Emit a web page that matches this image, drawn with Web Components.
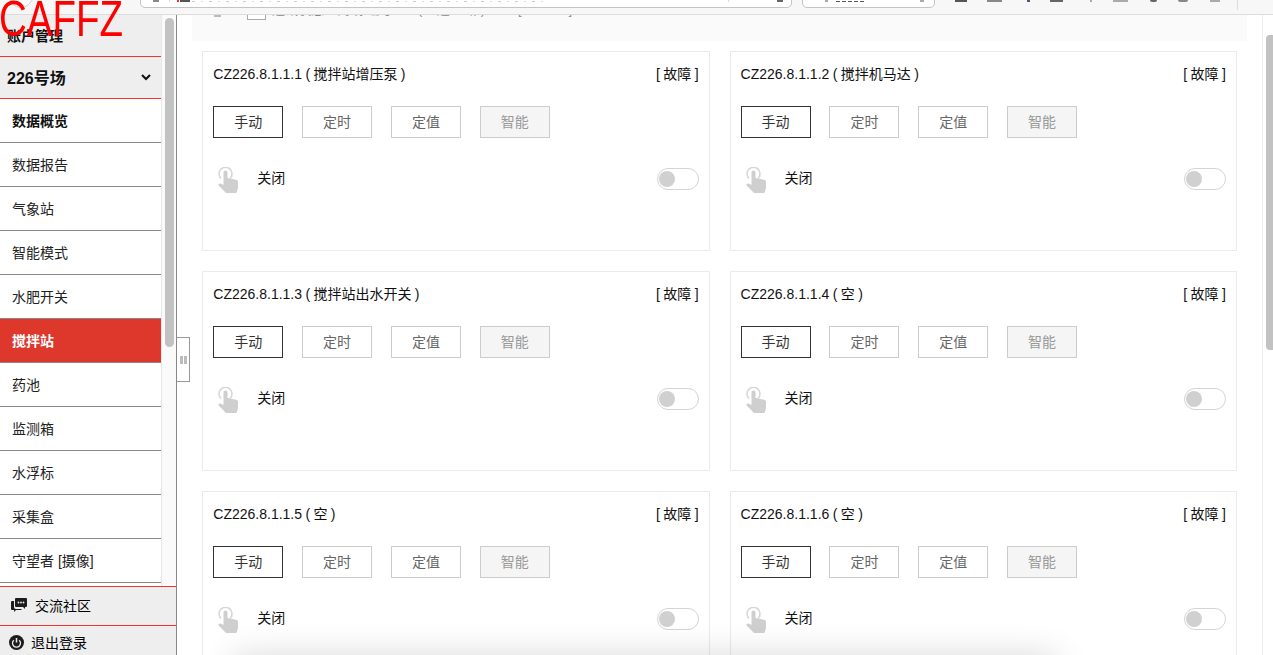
<!DOCTYPE html>
<html lang="zh">
<head>
<meta charset="utf-8">
<title>搅拌站</title>
<style>
    html, body { margin: 0; height: 100%; overflow: hidden; background: #fff; }
    body { font-family: "Liberation Sans", "Noto Sans CJK SC", sans-serif; font-size: 14px; color: #000; }
</style>
</head>
<body>
<app-shell>
    <browser-bar slot="top"></browser-bar>
    <side-bar slot="side">
        <nav-item>数据概览</nav-item>
        <nav-item>数据报告</nav-item>
        <nav-item>气象站</nav-item>
        <nav-item>智能模式</nav-item>
        <nav-item>水肥开关</nav-item>
        <nav-item active>搅拌站</nav-item>
        <nav-item>药池</nav-item>
        <nav-item>监测箱</nav-item>
        <nav-item>水浮标</nav-item>
        <nav-item>采集盒</nav-item>
        <nav-item>守望者 [摄像]</nav-item>
    </side-bar>
    <main-panel slot="main">
        <device-card code="CZ226.8.1.1.1" name="搅拌站增压泵"></device-card>
        <device-card code="CZ226.8.1.1.2" name="搅拌机马达"></device-card>
        <device-card code="CZ226.8.1.1.3" name="搅拌站出水开关"></device-card>
        <device-card code="CZ226.8.1.1.4" name="空"></device-card>
        <device-card code="CZ226.8.1.1.5" name="空"></device-card>
        <device-card code="CZ226.8.1.1.6" name="空"></device-card>
    </main-panel>
</app-shell>
<water-mark>CAFFZ</water-mark>

<template id="app-shell">
    <style>
        :host { display: flex; flex-direction: column; height: 655px; overflow: hidden; position: relative; }
        .body { flex: 1; min-height: 0; display: flex; }
        /* window shadow that comes up from below the picture */
        .shade { position: absolute; left: 240px; width: 810px; top: 662px; height: 20px; box-shadow: 0 0 34px 6px rgba(0,0,0,.16); }
    </style>
    <slot name="top"></slot>
    <div class="body">
        <slot name="side"></slot>
        <slot name="main"></slot>
    </div>
    <div class="shade"></div>
</template>

<template id="browser-bar">
    <style>
        :host { display: flex; align-items: flex-start; height: 14px; background: #f7f7f7; border-bottom: 1px solid #dcdcdc; overflow: hidden; flex: none; }
        .back { box-sizing: border-box; flex: none; width: 24px; height: 24px; margin: -16px 0 0 9px; border: 1px solid #ccc; border-radius: 50%; background: #fff; }
        .box { box-sizing: border-box; flex: none; height: 24px; margin-top: -16px; padding-bottom: 5px; background: #fff; border: 1px solid #c4c4c4; border-radius: 5px; display: flex; align-items: flex-end; }
        .box i { display: block; flex: none; height: 2px; background: #888; }
        .addr { margin-left: 107px; width: 652px; }
        .search { margin-left: 10px; width: 133px; }
        .strip { background: repeating-linear-gradient(90deg, #ccc 0 3px, transparent 3px 9px, #ddd 9px 11px, transparent 11px 17px) !important; height: 1px !important; }
        .box .sep { width: 1px; height: 24px; background: #ddd; }
        .dash { background: repeating-linear-gradient(90deg, #555 0 4px, transparent 4px 6px) !important; height: 1px !important; }
        .tools { display: flex; flex: none; align-items: flex-start; }
        .tools i { display: block; flex: none; height: 2px; }
        .end { flex: none; margin-left: 17px; width: 1px; height: 10px; background: #ddd; }
    </style>
    <div class="back"></div>
    <div class="box addr">
        <i style="margin-left:12px;width:6px"></i>
        <i class="sep" style="margin-left:10px"></i>
        <i style="margin-left:7px;width:2px;background:#e33"></i>
        <i style="margin-left:1px;width:10px;background:#555"></i>
        <i class="strip" style="margin-left:2px;width:353px"></i>
        <i class="sep" style="margin-left:183px"></i>
        <i style="margin-left:48px;width:6px;background:#666"></i>
    </div>
    <div class="box search">
        <i style="margin-left:22px;width:3px;background:#aaa"></i>
        <i class="dash" style="margin-left:8px;width:30px"></i>
        <i style="margin-left:54px;width:4px;background:#aaa"></i>
    </div>
    <div class="tools">
        <i style="margin-left:20px;width:12px;background:#555"></i>
        <i style="margin-left:20px;width:15px;background:#888"></i>
        <i style="margin-left:25px;width:3px;background:#557"></i>
        <i style="margin-left:20px;width:13px;background:#666"></i>
        <i style="margin-left:27px;width:2px;background:#aaa"></i>
        <i style="margin-left:21px;width:15px;background:#aaa"></i>
        <i style="margin-left:22px;width:7px;background:#666;border-radius:0 0 4px 4px"></i>
        <i style="margin-left:21px;width:10px;background:#888;border-radius:0 0 5px 5px"></i>
        <i style="margin-left:22px;width:10px;background:#aaa"></i>
    </div>
    <div class="end"></div>
</template>

<template id="side-bar">
    <style>
        :host { display: flex; flex-direction: column; flex: none; width: 177px; box-sizing: border-box; border-right: 1px solid #888; overflow: hidden; }
        .wrap { flex: 1; min-height: 0; display: flex; overflow: hidden; }
        .col { flex: none; width: 161px; }
        .head { background: #eee; border-bottom: 1px solid #e33; font-weight: bold; color: #111; box-sizing: border-box; height: 42px; padding: 0 10px 2px 7px; display: flex; align-items: center; justify-content: space-between; }
        .farm { font-size: 16px; padding-bottom: 1px; }
        .farm svg { display: block; }
        .track { flex: 1; background: #fafafa; border-left: 1px solid #e8e8e8; }
        .thumb { margin: 3px 0 0 3px; width: 9px; height: 329px; background: #c2c2c2; border-radius: 5px; }
        .foot { flex: none; background: #eee; }
        .foot div { display: flex; align-items: center; border-top: 1px solid #e33; }
        .chat { height: 36px; padding: 0 0 2px 11px; gap: 8px; }
        .off { height: 26px; padding: 3px 0 0 9px; gap: 7px; }
        .foot svg { display: block; flex: none; }
    </style>
    <div class="wrap">
        <div class="col">
            <div class="head">账户管理</div>
            <div class="head farm">226号场
                <svg width="10" height="7" viewBox="0 0 10 7"><path d="M1 1l4 4 4-4" fill="none" stroke="#111" stroke-width="2"/></svg>
            </div>
            <slot></slot>
        </div>
        <div class="track"><div class="thumb"></div></div>
    </div>
    <div class="foot">
        <div class="chat">
            <svg width="16" height="14" viewBox="0 0 16 14"><path d="M5 0h10a1 1 0 0 1 1 1v7a1 1 0 0 1-1 1h-1v2l-2-2H5a1 1 0 0 1-1-1V1a1 1 0 0 1 1-1z" fill="#1c1c1c"/><path d="M3 3v6a2 2 0 0 0 2 2h6l-1 1H5l-2 2v-2H1a1 1 0 0 1-1-1V4a1 1 0 0 1 1-1z" fill="#1c1c1c"/><circle cx="7.500" cy="4.500" r=".9" fill="#eee"/><circle cx="10" cy="4.500" r=".9" fill="#eee"/><circle cx="12.500" cy="4.500" r=".9" fill="#eee"/></svg>
            <span>交流社区</span>
        </div>
        <div class="off">
            <svg width="15" height="15" viewBox="0 0 15 15"><circle cx="7.500" cy="7.500" r="7.500" fill="#1c1c1c"/><path d="M4.800 5.200a4 4 0 1 0 5.400 0" fill="none" stroke="#eee" stroke-width="1.300"/><path d="M7.500 3v4.500" stroke="#eee" stroke-width="1.500"/></svg>
            <span>退出登录</span>
        </div>
    </div>
</template>

<template id="nav-item">
    <style>
        :host { display: flex; align-items: center; box-sizing: border-box; height: 44px; padding: 0 0 2px 12px; border-bottom: 1px solid #888; background: #fff; color: #222; }
        :host(:first-child) { font-weight: bold; color: #111; }
        :host([active]) { background: #de382c; color: #fff; font-weight: bold; }
    </style>
    <slot></slot>
</template>

<template id="main-panel">
    <style>
        :host { display: block; flex: 1; min-width: 0; position: relative; overflow: hidden; }
        .handle { position: absolute; left: 0; top: 322px; width: 13px; height: 45px; box-sizing: border-box; border: 1px solid #999; border-left: 0; background: #fff; display: flex; align-items: center; justify-content: center; gap: 1px; }
        .handle i { width: 3px; height: 8px; background: #bbb; }
        .content { padding-left: 15px; }
        .filter { height: 26px; width: 1055px; background: #fafafa; margin-bottom: 10px; display: flex; align-items: flex-start; overflow: hidden; }
        .filter .arrow { flex: none; width: 7px; height: 2px; margin-left: 22px; background: #bbb; }
        .filter .box { flex: none; box-sizing: border-box; width: 19px; height: 20px; margin: -15px 0 0 26px; border: 1px solid #aaa; background: #fff; }
        .filter .txt { flex: none; display: flex; margin: -13px 0 0 6px; line-height: 16px; font-size: 13px; color: #888; white-space: nowrap; }
        .filter .a { width: 146px; }
        .filter .b { width: 100px; }
        .grid { display: grid; grid-template-columns: 507.3px 507.3px; gap: 20px; margin-left: 10.3px; }
        .sb { position: absolute; right: 0; top: 0; bottom: 0; width: 10px; background: #fff; border-left: 1px solid #eee; }
        .sb b { position: absolute; right: 0; top: 20px; width: 7px; height: 315px; border-radius: 4px 0 0 4px; background: #c2c2c2; }
    </style>
    <div class="content">
        <div class="filter">
            <span class="arrow"></span><span class="box"></span>
            <span class="txt"><span class="a">通讯状态：离线 编号</span><span class="b">( 1 通 1 断 )</span><span>[ 1 / 100 ]</span></span>
        </div>
        <div class="grid"><slot></slot></div>
    </div>
    <div class="handle"><i></i><i></i></div>
    <div class="sb"><b></b></div>
</template>

<template id="device-card">
    <style>
        :host { display: block; box-sizing: border-box; height: 200px; border: 1px solid #ebebeb; padding: 0 10px; background: #fff; }
        .title { display: flex; justify-content: space-between; box-sizing: border-box; height: 44px; padding-bottom: 2px; align-items: center; color: #111; word-spacing: -.5px; }
        .modes { display: flex; gap: 18.8px; margin-top: 10px; }
        .mode { box-sizing: border-box; width: 70px; height: 32px; padding-bottom: 2px; border: 1px solid #ccc; display: flex; align-items: center; justify-content: center; color: #666; }
        .mode.on { border-color: #333; color: #333; }
        .mode.off { background: #f5f5f5; color: #999; }
        .row { display: flex; align-items: center; margin-top: 24px; height: 34px; }
        .row svg { display: block; flex: none; margin: 2px 0 0 5px; }
        .state { margin-left: 19px; margin-top: -5px; color: #111; }
    </style>
    <div class="title"><span class="name"></span><span>[ 故障 ]</span></div>
    <div class="modes">
        <div class="mode on">手动</div>
        <div class="mode">定时</div>
        <div class="mode">定值</div>
        <div class="mode off">智能</div>
    </div>
    <div class="row">
        <svg width="20" height="26" viewBox="0 0 20 26">
            <path d="M3 11.500a6.500 6.500 0 1 1 9 0" fill="none" stroke="#d6d6d6" stroke-width="1.500"/>
            <path d="M5.500 5.500a2 2 0 0 1 4 0V11l7.500 1.500c1.800.4 3 1 3 2.500v6l-1.500 5H8L.6 18.500c-.8-1 .5-2.500 2-2l2.900 1.500z" fill="#cfcfcf"/>
        </svg>
        <span class="state">关闭</span>
        <tog-gle></tog-gle>
    </div>
</template>

<template id="tog-gle">
    <style>
        :host { display: block; margin-left: auto; width: 42px; height: 22px; box-sizing: border-box; padding: 2px 1px; border: 1px solid #d4d4d4; border-radius: 11px; background: #fff; }
        i { display: block; width: 16px; height: 16px; border-radius: 50%; background: #d0d0d0; }
    </style>
    <i></i>
</template>

<template id="water-mark">
    <style>
        :host { position: fixed; left: -1px; top: -6px; color: #f00; font: 50px/50px "Liberation Sans", sans-serif; transform: scaleX(.77); transform-origin: 0 0; z-index: 5; }
    </style>
    <slot></slot>
</template>

<script>
    // every element clones the template that carries its own tag name
    class Base extends HTMLElement {
        constructor() {
            super();
            const tmpl = document.getElementById(this.tagName.toLowerCase());
            this.attachShadow({mode: 'open'}).appendChild(tmpl.content.cloneNode(true));
        }
    }

    class DeviceCard extends Base {
        connectedCallback() {
            this.shadowRoot.querySelector('.name').textContent =
                this.getAttribute('code') + ' ( ' + this.getAttribute('name') + ' )';
        }
    }

    ['app-shell', 'browser-bar', 'side-bar', 'nav-item', 'main-panel', 'tog-gle', 'water-mark'].forEach(function (name) {
        customElements.define(name, class extends Base {});
    });
    customElements.define('device-card', DeviceCard);
</script>
</body>
</html>
